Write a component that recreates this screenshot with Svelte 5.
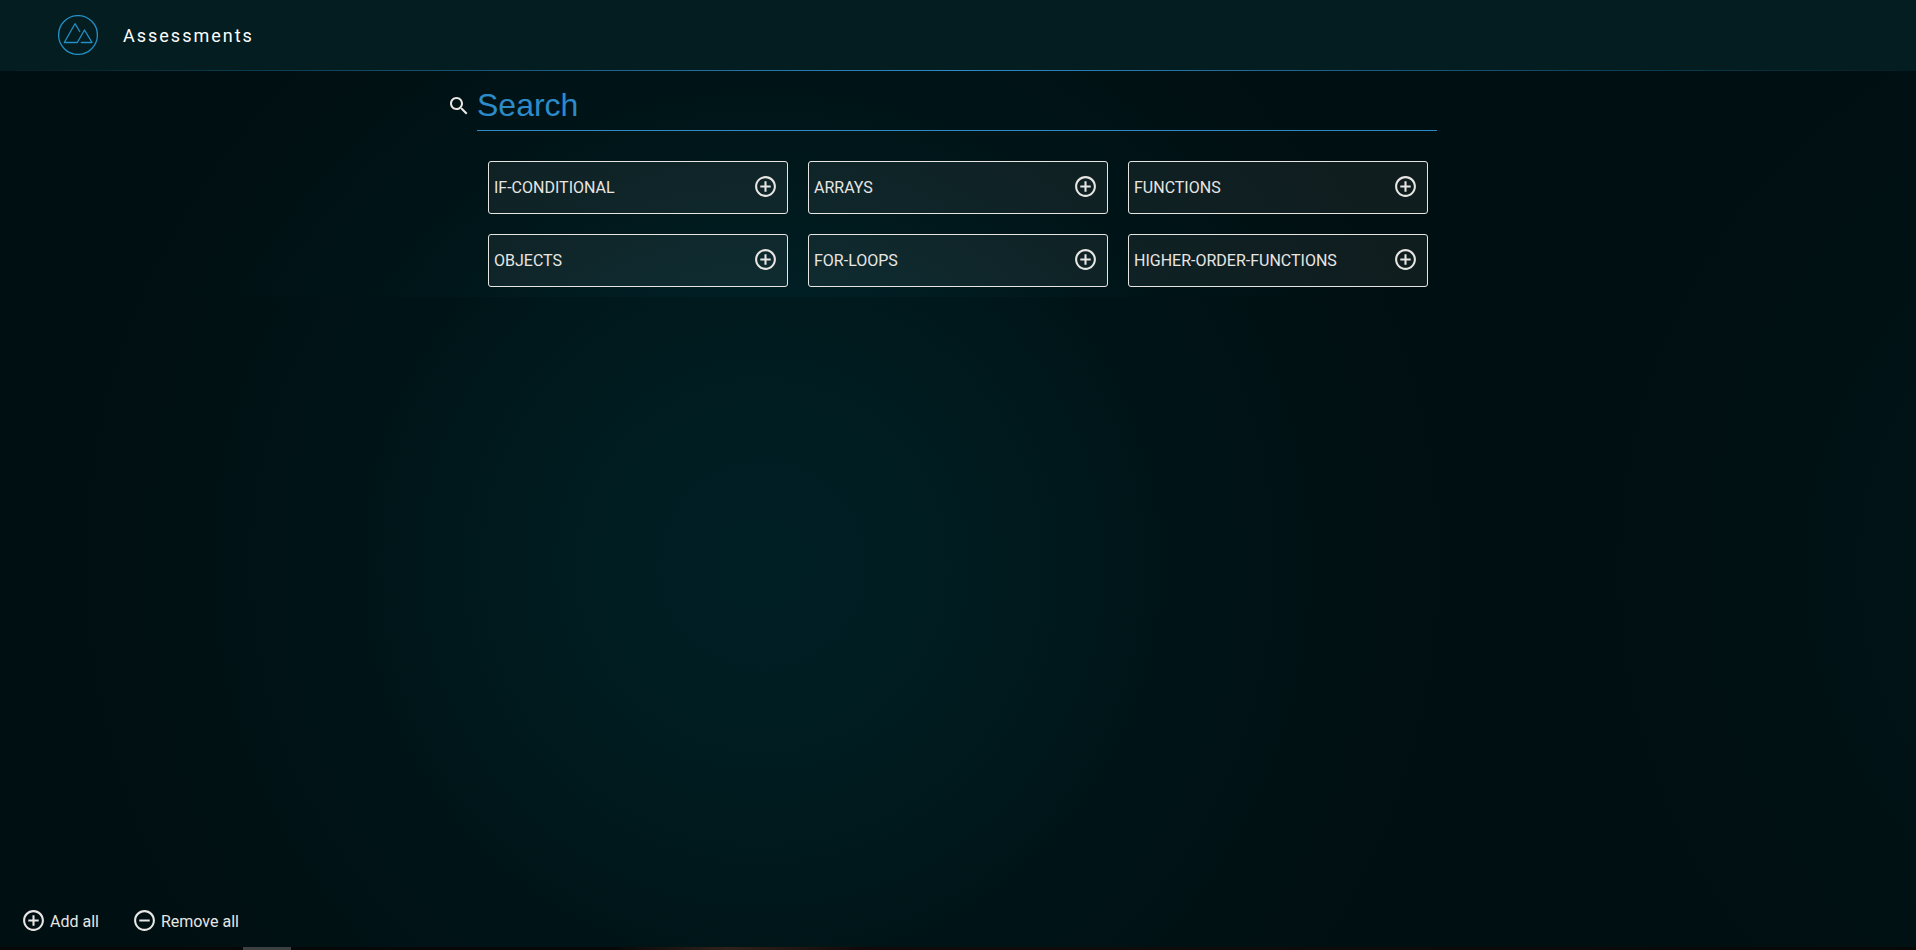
<script>
  const topics = ['IF-CONDITIONAL', 'ARRAYS', 'FUNCTIONS', 'OBJECTS', 'FOR-LOOPS', 'HIGHER-ORDER-FUNCTIONS'];
  let query = $state('');
  let shown = $derived(topics.filter((t) => t.includes(query.toUpperCase())));
</script>

{#snippet circleIcon(plus)}
  <svg class="circle-icon" viewBox="0 0 24 24" aria-hidden="true">
    {#if plus}
      <path d="M13 7h-2v4H7v2h4v4h2v-4h4v-2h-4V7zm-1-5C6.48 2 2 6.48 2 12s4.48 10 10 10 10-4.48 10-10S17.52 2 12 2zm0 18c-4.41 0-8-3.59-8-8s3.59-8 8-8 8 3.59 8 8-3.59 8-8 8z" />
    {:else}
      <path d="M7 11v2h10v-2H7zm5-9C6.48 2 2 6.48 2 12s4.48 10 10 10 10-4.48 10-10S17.52 2 12 2zm0 18c-4.41 0-8-3.59-8-8s3.59-8 8-8 8 3.59 8 8-3.59 8-8 8z" />
    {/if}
  </svg>
{/snippet}

<div class="page">
  <header>
    <svg class="logo" viewBox="0 0 40 40" aria-hidden="true">
      <circle cx="20" cy="20" r="19.4" />
      <path d="M21.7 16.5 17 8.7 6.3 27.5h13L26.5 15 34 27.5H23.3" />
    </svg>
    <h1>Assessments</h1>
  </header>

  <main>
    <div class="content">
      <div class="search">
        <label for="search" aria-label="Search">
          <svg viewBox="0 0 24 24" aria-hidden="true">
            <path d="M15.5 14h-.79l-.28-.27C15.41 12.59 16 11.11 16 9.5 16 5.91 13.09 3 9.5 3S3 5.91 3 9.5 5.91 16 9.5 16c1.61 0 3.09-.59 4.23-1.57l.27.28v.79l5 4.99L20.49 19l-4.99-5zm-6 0C7.01 14 5 11.99 5 9.5S7.01 5 9.5 5 14 7.01 14 9.5 11.99 14 9.5 14z" />
          </svg>
        </label>
        <input id="search" type="text" placeholder="Search" bind:value={query} />
      </div>
      <div class="topics">
        {#each shown as topic}
          <button class="topic">
            <span>{topic}</span>
            {@render circleIcon(true)}
          </button>
        {/each}
      </div>
    </div>
  </main>

  <footer>
    <button class="action">{@render circleIcon(true)}<span>Add all</span></button>
    <button class="action">{@render circleIcon(false)}<span>Remove all</span></button>
  </footer>
  <div class="strip"><div class="thumb"></div></div>
</div>

<style>
  :global(body) {
    background: #000f12;
  }
  .page {
    min-height: 100vh;
    display: flex;
    flex-direction: column;
    box-sizing: border-box;
    font-family: Roboto, sans-serif;
    color: #e8e6e3;
    background:
      radial-gradient(circle at 115% 60%, rgba(0, 26, 30, 0.8) 0, rgba(0, 21, 24, 0.6) 320px, rgba(0, 15, 18, 0) 620px),
      radial-gradient(circle at 762px 565px, #001f25 0, #001d21 160px, #00191d 290px, #001417 410px, #001215 530px, #000f12 700px);
  }
  header {
    display: flex;
    align-items: center;
    gap: 25px;
    height: 70px;
    padding-left: 58px;
    background: #031d21;
    border-bottom: 1px solid;
    border-image: linear-gradient(to right, transparent, #2d8bc9 50%, transparent) 1;
  }
  .logo {
    width: 40px;
    height: 40px;
    fill: none;
    stroke: #2390c5;
    stroke-width: 1.3;
    stroke-linejoin: round;
    stroke-linecap: round;
  }
  h1 {
    margin: 0;
    font-size: 18px;
    font-weight: 400;
    letter-spacing: 2px;
    color: #fff;
  }
  main {
    background: radial-gradient(circle at 762px 494px, rgba(0, 60, 70, 0.16) 250px, rgba(0, 60, 70, 0.03) 480px, transparent 700px);
  }
  .content {
    max-width: 1000px;
    margin: 0 auto;
  }
  .search {
    display: flex;
    align-items: center;
    padding: 10px 21px 0 0;
    margin-left: -11px;
  }
  .search label {
    display: flex;
    margin-right: 6px;
  }
  .search svg {
    width: 24px;
    height: 24px;
    fill: #e8e6e3;
  }
  .search input {
    flex: 1;
    min-width: 0;
    height: 50px;
    box-sizing: border-box;
    padding: 0 0 1px;
    border: 0;
    border-bottom: 1px solid #2d8bc9;
    outline: 0;
    background: transparent;
    color: #2d8bc9;
    font: 32px "Liberation Sans", Arial, sans-serif;
  }
  .search input::placeholder {
    color: #2d8bc9;
    opacity: 1;
  }
  .topics {
    display: grid;
    grid-template-columns: repeat(3, 1fr);
    gap: 20px;
    padding: 30px 30px 10px;
  }
  button {
    font: 16px/24px Roboto, sans-serif;
    color: #e8e6e3;
    cursor: pointer;
  }
  .topic {
    display: flex;
    align-items: center;
    justify-content: space-between;
    height: 53px;
    padding: 0 9px 0 5px;
    border: 1px solid #e8e6e3;
    border-radius: 3px;
    background: rgba(255, 255, 255, 0.06);
  }
  .circle-icon {
    width: 25px;
    height: 25px;
    fill: #e8e6e3;
    margin-bottom: 3px;
  }
  footer {
    display: flex;
    gap: 33px;
    margin-top: auto;
    padding: 0 21px 11px;
  }
  .action {
    display: flex;
    align-items: center;
    gap: 4px;
    padding: 0;
    border: 0;
    background: none;
  }
  .strip {
    height: 3px;
    background: linear-gradient(to right, #080808 32%, #30221c 38%, #120a0a 45%, #100c0c 60%, #080808);
  }
  .thumb {
    width: 48px;
    height: 3px;
    margin-left: 243px;
    background: #3d4041;
  }
</style>
